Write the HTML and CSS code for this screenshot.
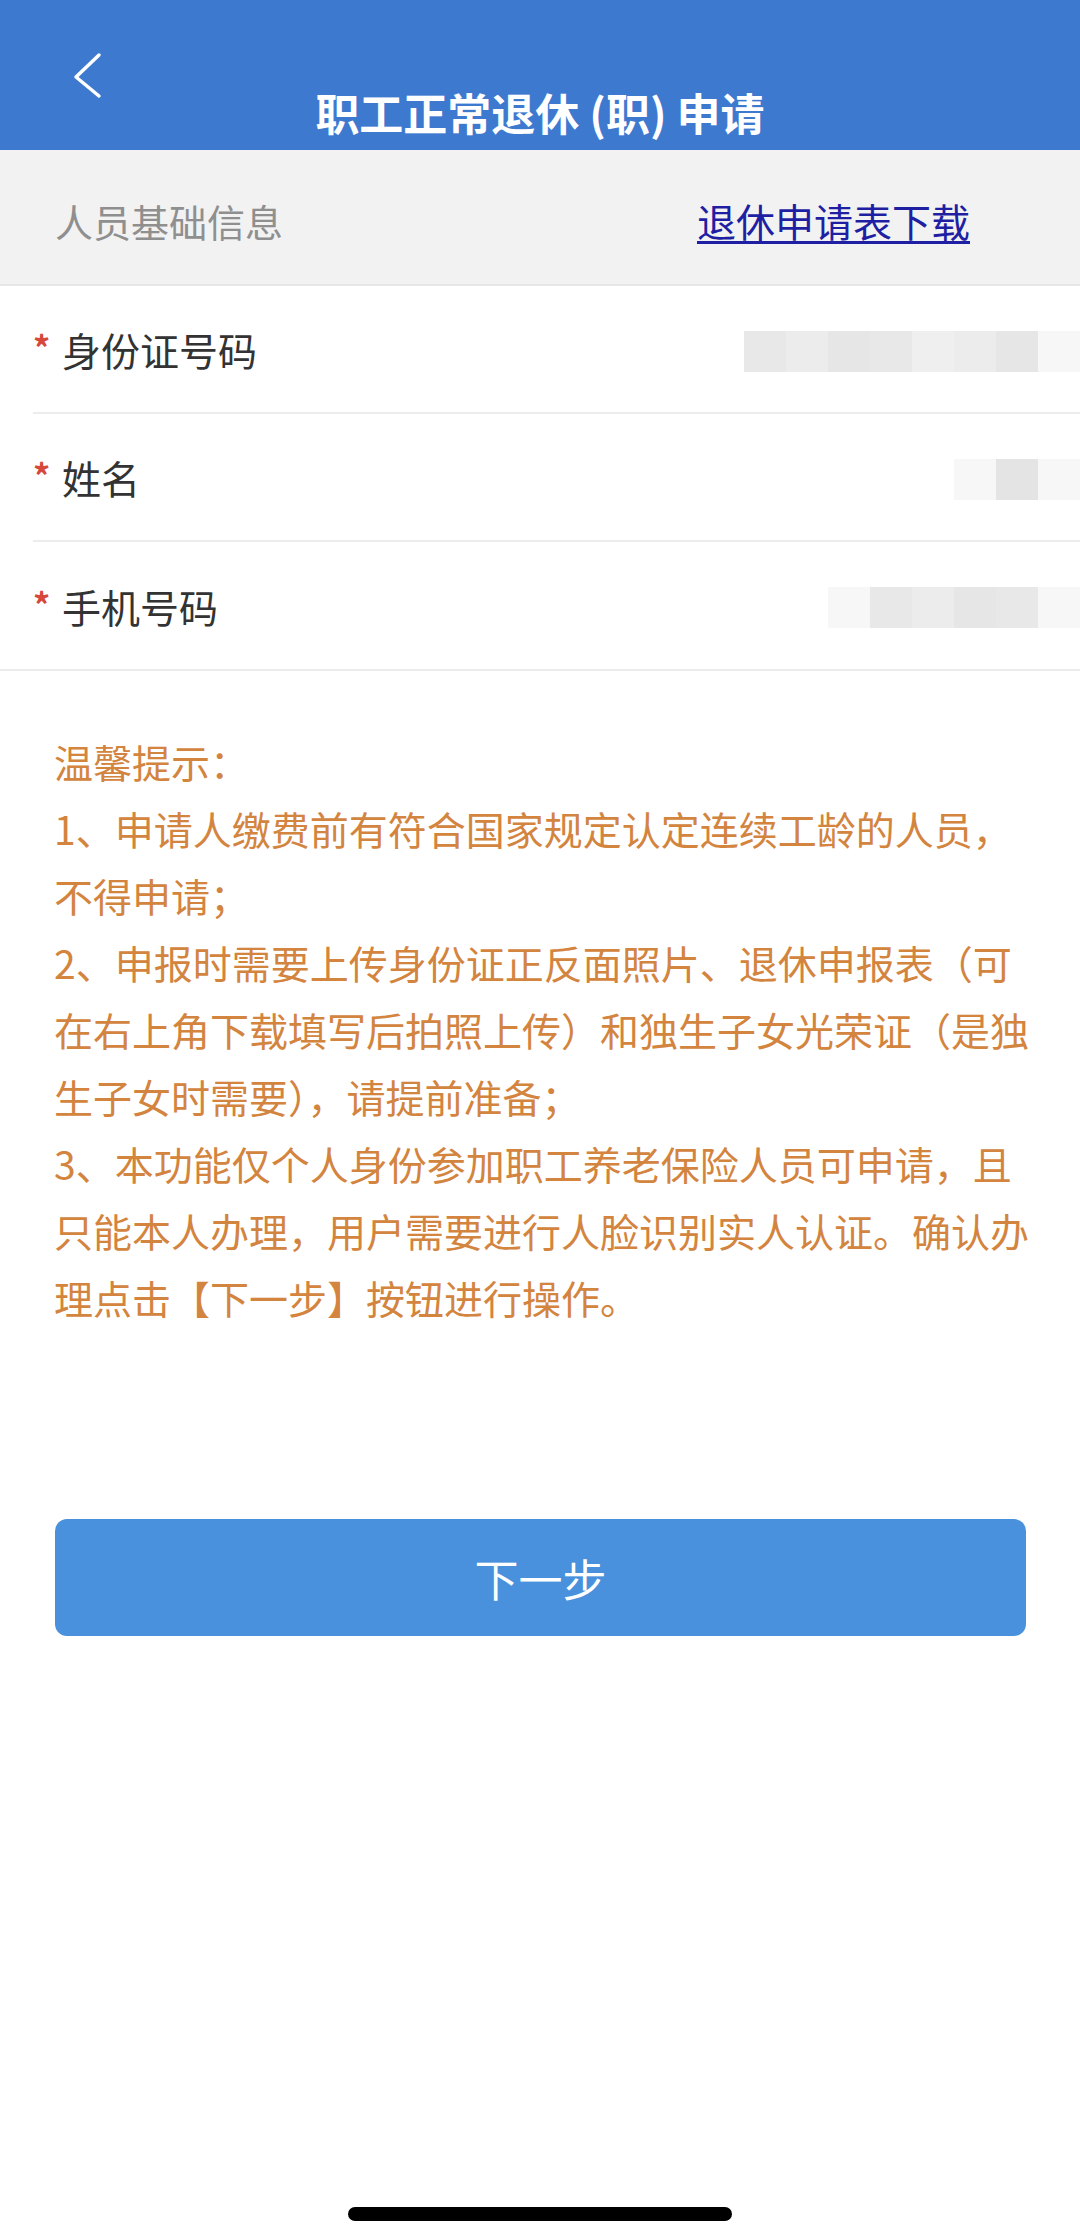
FILE: index.html
```html
<!DOCTYPE html>
<html lang="zh-CN">
<head>
    <meta charset="UTF-8">
    <meta name="viewport" content="width=device-width, initial-scale=1.0">
    <title>职工正常退休 (职) 申请</title>
    <link rel="stylesheet" href="styles.css">
</head>
<body>
    <div class="nav">
        <svg class="back" width="34" height="50" viewBox="0 0 34 50">
            <polyline points="29,5 6,27 29,46" fill="none" stroke="#fff" stroke-width="3.5" stroke-linecap="round" stroke-linejoin="round"/>
        </svg>
        <h1 class="title">职工正常退休 (职) 申请</h1>
    </div>

    <div class="section-bar">
        <span class="section-title">人员基础信息</span>
        <a class="download" href="#">退休申请表下载</a>
    </div>

    <div class="form">
        <div class="form-row">
            <span class="label"><span class="star">*</span>身份证号码</span>
            <div class="mosaic">
                <i class="c1"></i><i class="c2"></i><i class="c3"></i><i class="c1"></i><i class="c4"></i><i class="c2"></i><i class="c3"></i><i class="c5"></i>
            </div>
        </div>
        <div class="form-row">
            <span class="label"><span class="star">*</span>姓名</span>
            <div class="mosaic">
                <i class="c5"></i><i class="c6"></i><i class="c5"></i>
            </div>
        </div>
        <div class="form-row">
            <span class="label"><span class="star">*</span>手机号码</span>
            <div class="mosaic">
                <i class="c5"></i><i class="c1"></i><i class="c2"></i><i class="c3"></i><i class="c1"></i><i class="c5"></i>
            </div>
        </div>
    </div>

    <div class="tips">
        <p>温馨提示：</p>
        <p>1、申请人缴费前有符合国家规定认定连续工龄的人员，不得申请；</p>
        <p>2、申报时需要上传身份证正反面照片、退休申报表（可在右上角下载填写后拍照上传）和独生子女光荣证（是独生子女时需要），请提前准备；</p>
        <p>3、本功能仅个人身份参加职工养老保险人员可申请，且只能本人办理，用户需要进行人脸识别实人认证。确认办理点击【下一步】按钮进行操作。</p>
    </div>

    <button class="next">下一步</button>

    <div class="home-bar"></div>
</body>
</html>
```

FILE: styles.css
```css
body {
    margin: 0;
    min-height: 2239px;
    position: relative;
    background: #fff;
    font-family: "Noto Sans CJK SC", "Noto Sans", sans-serif;
}
.nav {
    display: grid;
    height: 150px;
    background-color: #3d79cf;
}
.back {
    grid-area: 1 / 1;
    justify-self: start;
    align-self: start;
    margin: 50px 0 0 70px;
}
.title {
    grid-area: 1 / 1;
    align-self: start;
    margin: 90px 0 0;
    font-size: 44px;
    line-height: 44px;
    font-weight: 700;
    color: #fff;
    text-align: center;
}
.section-bar {
    display: flex;
    align-items: center;
    justify-content: space-between;
    box-sizing: border-box;
    height: 136px;
    padding: 6px 110px 0 55px;
    background-color: #f2f2f2;
    border-bottom: 2px solid #e6e6e6;
}
.section-title {
    font-size: 38px;
    color: #8f8f8f;
}
.download {
    font-size: 39px;
    color: #1f1fa3;
    text-decoration: underline;
    text-underline-offset: 4px;
}
.form {
    border-bottom: 2px solid #ebebeb;
}
.form-row {
    display: flex;
    align-items: center;
    height: 126px;
    margin-left: 33px;
    border-bottom: 2px solid #ececec;
}
.form-row:last-child {
    border-bottom: none;
    height: 127px;
}
.label {
    font-size: 39px;
    color: #333;
}
.star {
    display: inline-block;
    width: 29px;
    font-size: 34px;
    font-weight: 700;
    color: #d8473c;
    vertical-align: 5px;
}
.mosaic {
    display: flex;
    margin-left: auto;
    margin-top: 4px;
}
.mosaic i {
    display: block;
    width: 42px;
    height: 41px;
}
.c1 { background: #e8e8e8; }
.c2 { background: #ececec; }
.c3 { background: #e6e6e6; }
.c4 { background: #efefef; }
.c5 { background: #f7f7f7; }
.c6 { background: #e4e4e4; }
.tips {
    padding: 57px 41px 0 54px;
    font-size: 39px;
    line-height: 67px;
    color: #d3843e;
}
.tips p {
    margin: 0;
}
.next {
    display: block;
    box-sizing: border-box;
    width: 971px;
    height: 117px;
    margin: 188px 0 0 55px;
    border: none;
    border-radius: 12px;
    background-color: #4991dc;
    color: #fff;
    font-family: inherit;
    font-size: 44px;
    cursor: pointer;
}
.home-bar {
    position: absolute;
    left: 348px;
    bottom: 18px;
    width: 384px;
    height: 14px;
    border-radius: 7px;
    background: #000;
}
```
